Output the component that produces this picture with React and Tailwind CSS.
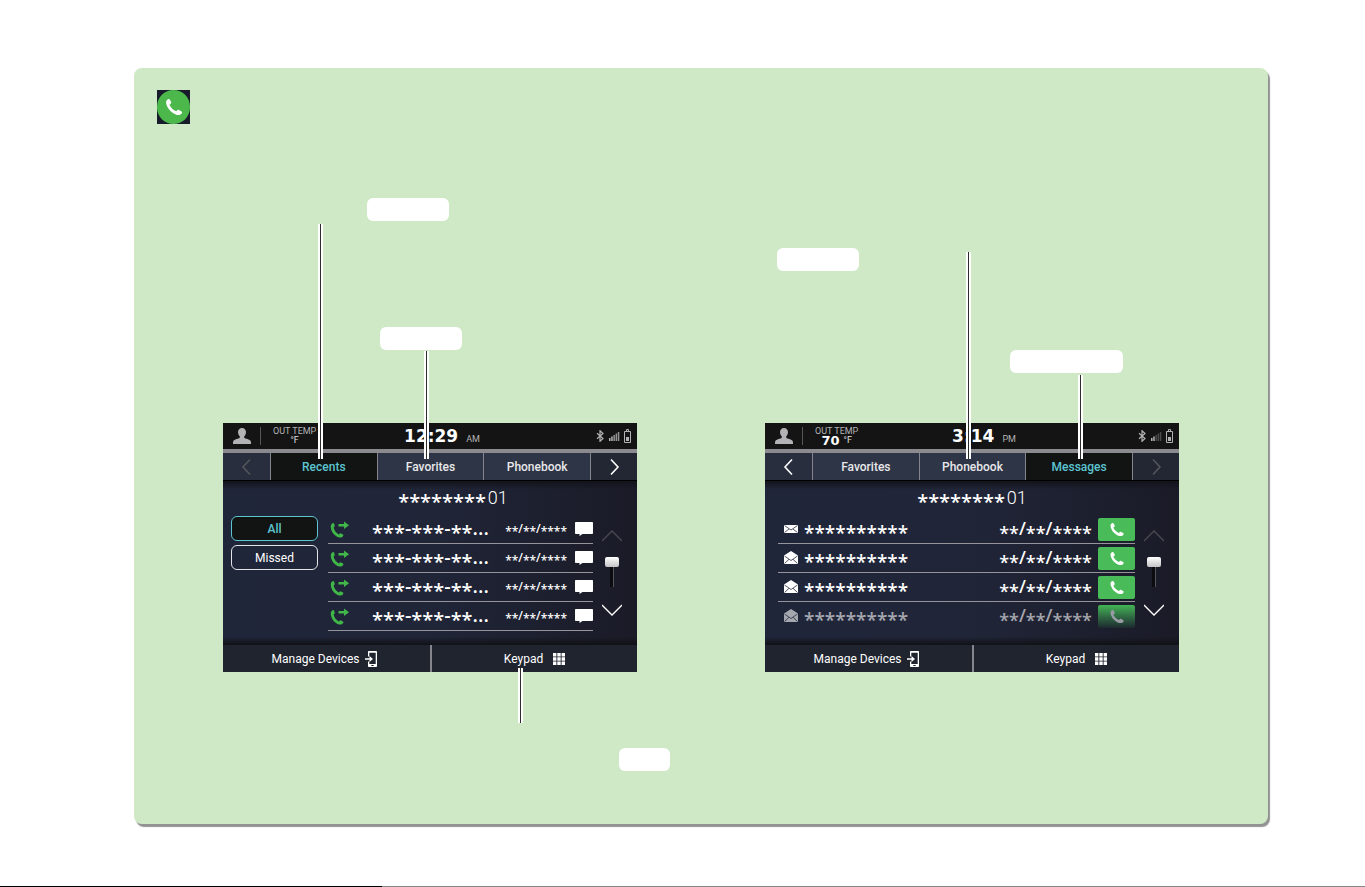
import React from 'react';

const PHONE = "M5.5 1.500c1-.7 2-.4 2.500.5l1.500 3c.4.8.1 1.600-.6 2.100l-1.400 1c1.500 3.600 4.500 6.700 8.300 8.200l1.300-1.300c.6-.6 1.400-.7 2.100-.3l3 1.700c.8.5 1 1.500.4 2.300-1.600 2.200-4.500 2.800-7.500 1.500C9 17.500 4.500 12.500 3.400 6.500 3 4.300 3.800 2.500 5.500 1.500z";

const PhoneIcon = ({ className }) => (
  <svg className={className} viewBox="1 0 24 22" fill="currentColor">
    <path d={PHONE} />
  </svg>
);

const OutgoingCall = () => (
  <svg className="w-5 h-[17px] text-[#41b649]" viewBox="0 0 20 17" fill="currentColor">
    <path d="M2.500 2.200c.7-.4 1.500-.1 1.700.5l.5 2c.1.600-.1 1-.6 1.300l-.5.400c.6 2.800 2.300 5.300 5.200 7l.9-.7c.4-.4.9-.4 1.300-.2l1.900 1c.6.4.7 1 .2 1.500-1.200 1.600-3 2-4.900 1.200C4.200 14.600 1 10.500.8 5.700.7 4.200 1.300 2.900 2.500 2.200z" />
    <path d="M8.500 3.100H14V.5l5 3.800-5 3.800V5.500H8.500z" />
  </svg>
);

const UserIcon = () => (
  <svg className="w-[18px] h-4 text-[#b3b3b5]" viewBox="0 0 18 16" fill="currentColor">
    <path d="M9 0c2.400 0 4 1.700 4 4 0 1.700-.7 3.400-1.800 4.400v1.400c.8.900 5.800 1.500 6.500 3.300.3.700.3 1.800.3 2.900H0c0-1.100 0-2.200.3-2.900.7-1.800 5.700-2.400 6.500-3.300V8.400C5.700 7.400 5 5.700 5 4c0-2.300 1.600-4 4-4z" />
  </svg>
);

const StatusIcons = ({ weak }) => (
  <div className="flex items-center gap-1 text-[#b3b3b5]">
    <svg className="w-2 h-3" viewBox="0 0 8 12" fill="none" stroke="currentColor" strokeWidth="1.200">
      <path d="M1 3.300l6 5.200L4 11.300V.7l3 2.800L1 8.700" />
    </svg>
    <svg className="w-3 h-3" viewBox="0 0 12 12" fill="currentColor">
      <path d="M1 8h1.500v3H1zM3.200 6.500h1.500V11H3.200z" />
      <path opacity={weak ? 0.35 : 0.8} d="M5.400 5h1.500v6H5.400zM7.600 3.500h1.500V11H7.600zM9.800 2h1.500v9H9.800z" />
    </svg>
    <svg className="w-[7px] h-[14px]" viewBox="0 0 7 14" fill="none" stroke="currentColor">
      <path d="M.5 2.500h6v11h-6zM2.500 2.500v-2h2v2" />
      <path d="M2 8h3v4H2z" fill="currentColor" stroke="none" />
    </svg>
  </div>
);

const Chevron = ({ d, className }) => (
  <svg className={className} viewBox="0 0 20 20" fill="none" stroke="currentColor" strokeWidth="1.600">
    <path d={d} />
  </svg>
);

const LEFT = "M13 2.500L6 10l7 7.500";
const RIGHT = "M7 2.500l7 7.500-7 7.500";

const MailIcon = () => (
  <svg className="w-[14px] h-[14px]" viewBox="0 0 14 14">
    <path d="M0 3h14v8H0z" fill="#fff" />
    <path d="M.5 3.500L7 8l6.500-4.500M.5 10.500L5 7M13.500 10.500L9 7" fill="none" stroke="#2a3040" strokeWidth=".8" />
  </svg>
);

const OpenMailIcon = () => (
  <svg className="w-[14px] h-[14px]" viewBox="0 0 14 14">
    <path d="M7 0l7 4.500V13H0V4.500z" fill="#fff" />
    <path d="M.5 5L7 9.500 13.500 5M.5 12.500L5 8.300M13.500 12.500L9 8.300" fill="none" stroke="#2a3040" strokeWidth=".8" />
  </svg>
);

const ChatIcon = () => (
  <svg className="w-[18px] h-[14px]" viewBox="0 0 18 14" fill="#fff">
    <path d="M1 0h16c.6 0 1 .4 1 1v10c0 .6-.4 1-1 1H7.500L4.500 14v-2H1c-.6 0-1-.4-1-1V1c0-.6.4-1 1-1z" />
  </svg>
);

const DeviceIcon = () => (
  <svg className="w-3 h-4" viewBox="0 0 12 16" fill="#fff">
    <path fillRule="evenodd" d="M3 1c0-.6.4-1 1-1h7c.6 0 1 .4 1 1v14c0 .6-.4 1-1 1H4c-.6 0-1-.4-1-1v-4.500h1.300V13h6.400V1.800H4.300v3.700H3zM6.300 14h2.400v1H6.300z" />
    <path d="M0 7.300h4.500V5L8 8l-3.500 3V8.700H0z" />
  </svg>
);

const KeypadIcon = () => (
  <svg className="w-3 h-3" viewBox="0 0 12 12" fill="#fff">
    <path d="M0 0h3.400v3.400H0zM4.300 0h3.400v3.400H4.300zM8.600 0H12v3.400H8.600zM0 4.300h3.400v3.400H0zM4.300 4.300h3.400v3.400H4.300zM8.600 4.300H12v3.400H8.600zM0 8.600h3.400V12H0zM4.300 8.600h3.400V12H4.300zM8.600 8.600H12V12H8.600z" />
  </svg>
);

// Stars sit high in the font, so they are dropped to the middle of the line
const Masked = ({ text, className }) => (
  <span className={`whitespace-nowrap font-['Noto_Sans'] font-medium leading-6 ${className}`}>
    {text.split(/(\*+)/).map((part, i) => (
      part[0] === '*' ? <span key={i} className="align-[-0.25em] leading-none">{part}</span> : part
    ))}
  </span>
);

const StatusBar = ({ temp, time, period, weak }) => (
  <div className="grid grid-cols-3 items-center h-[26px] bg-[#141414] text-[#b3b3b5]">
    <div className="flex items-center pl-[10px]">
      <UserIcon />
      <div className="h-[18px] ml-[9px] mr-3 border-l border-[#55555a]" />
      <div className="text-[9px] leading-[9px] whitespace-nowrap">
        <p>OUT TEMP</p>
        <p className="flex items-center justify-center gap-1 h-[10px]">
          {temp && <b className="font-['DejaVu_Sans'] text-[13px] text-white">{temp}</b>}
          <span className="text-[#e0e0e2]">°F</span>
        </p>
      </div>
    </div>
    <div className="flex items-baseline justify-center gap-2 pl-6">
      <b className="font-['DejaVu_Sans'] text-[17px] leading-6 text-white">{time}</b>
      <span className="text-[9px]">{period}</span>
    </div>
    <div className="flex justify-end pr-[6px]">
      <StatusIcons weak={weak} />
    </div>
  </div>
);

const Tabs = ({ tabs, active, atStart }) => (
  <div className="grid grid-cols-[47px_1fr_1fr_1fr_47px] h-7 border-b border-black bg-[#2e3546] text-xs font-medium text-[#e8e8ea]">
    <button aria-label="Previous" className="flex items-center justify-center bg-[#282e3d]">
      <Chevron d={LEFT} className={`w-5 h-5 ${atStart ? 'text-[#55565c]' : 'text-white'}`} />
    </button>
    {tabs.map(tab => (
      <button
        key={tab}
        className={`border-l border-[#85858d] ${tab === active ? 'bg-[#121313] text-[#5cc5d0]' : ''}`}
      >
        {tab}
      </button>
    ))}
    <button aria-label="Next" className="flex items-center justify-center border-l border-[#85858d] bg-[#222733]">
      <Chevron d={RIGHT} className={`w-5 h-5 ${atStart ? 'text-white' : 'text-[#55565c]'}`} />
    </button>
  </div>
);

const Scroller = () => (
  <div className="flex flex-col items-center w-5 ml-[9px] mr-[15px] pt-[15px]">
    <svg className="w-5 h-3 text-[#4a4a50]" viewBox="0 0 20 12" fill="none" stroke="currentColor" strokeWidth="1.300">
      <path d="M0 11L10 1l10 10" />
    </svg>
    <div className="w-[14px] h-[10px] mt-[15px] rounded-xs bg-linear-to-b from-white to-[#c4c4c6]" />
    <div className="w-1 h-5 border-r border-[#55555c] bg-[#0c0c10]" />
    <svg className="w-5 h-3 mt-[17px] text-white" viewBox="0 0 20 12" fill="none" stroke="currentColor" strokeWidth="1.300">
      <path d="M0 1l10 10L20 1" />
    </svg>
  </div>
);

const Screen = ({ status, tabs, active, atStart, children }) => (
  <div className="bg-linear-to-r from-[#20263a] via-[#202538] to-[#1a1b27] font-[Roboto,sans-serif] text-white">
    <StatusBar {...status} />
    <div className="h-1 bg-[#8a8a8f]" />
    <Tabs tabs={tabs} active={active} atStart={atStart} />
    <div className={`flex items-center justify-center h-[34px] bg-linear-to-b from-[#12131a] to-transparent to-25% ${atStart ? 'pl-[46px]' : ''}`}>
      <Masked text="********" className="text-xl" />
      <span className="pl-[2px] text-lg font-light">01</span>
    </div>
    <div className="flex">
      {children}
      <Scroller />
    </div>
    <div className="h-[14px] bg-linear-to-b from-transparent from-40% to-[#111216]" />
    <div className="grid grid-cols-2 h-[27px] text-xs bg-[#20242f]">
      <button className="flex items-center justify-center gap-[6px] pr-1">
        Manage Devices <DeviceIcon />
      </button>
      <button className="flex items-center justify-center gap-[10px] border-l-2 border-[#85858d]">
        Keypad <KeypadIcon />
      </button>
    </div>
  </div>
);

const RecentsScreen = () => (
  <Screen
    status={{ time: '12:29', period: 'AM' }}
    tabs={['Recents', 'Favorites', 'Phonebook']}
    active="Recents"
    atStart
  >
    <div className="flex flex-col gap-1 w-[87px] ml-2 mr-[10px] pt-px text-xs">
      <button className="h-[25px] border border-[#5cc5d0] rounded-md bg-[#121313] text-[#5cc5d0] font-medium">All</button>
      <button className="h-[25px] border border-[#e4e4e8] rounded-md">Missed</button>
    </div>
    <ul className="flex-1">
      {[1, 2, 3, 4].map(n => (
        <li key={n} className="flex items-center h-[29px] pl-[2px] border-b border-[#94949a]">
          <OutgoingCall />
          <Masked text="***-***-**..." className="pl-[22px] text-xl" />
          <Masked text="**/**/****" className="ml-auto pr-2 text-xs" />
          <ChatIcon />
        </li>
      ))}
    </ul>
  </Screen>
);

const MessagesScreen = () => (
  <Screen
    status={{ temp: '70', time: '3:14', period: 'PM', weak: true }}
    tabs={['Favorites', 'Phonebook', 'Messages']}
    active="Messages"
  >
    <ul className="flex-1 ml-[13px]">
      {[1, 2, 3, 4].map(n => {
        const faded = n === 4;
        return (
          <li key={n} className={`flex items-center h-[29px] pl-[6px] border-b ${faded ? 'border-transparent' : 'border-[#94949a]'}`}>
            <div className={`flex flex-1 items-center ${faded ? 'opacity-60' : ''}`}>
              {n === 1 ? <MailIcon /> : <OpenMailIcon />}
              <Masked text="**********" className="pl-[6px] text-[19px]" />
              <Masked text="**/**/****" className="ml-auto pr-[6px] text-lg" />
            </div>
            <button
              aria-label="Call"
              className={`flex items-center justify-center w-[37px] h-[23px] rounded-xs ${faded ? 'bg-linear-to-b from-[#42b553] to-[#1c2a2e] text-[#9a9aa5]' : 'bg-[#4abb59]'}`}
            >
              <PhoneIcon className="w-4 h-[15px]" />
            </button>
          </li>
        );
      })}
    </ul>
  </Screen>
);

const Pill = ({ className }) => <div className={`rounded-md bg-white ${className}`} />;

// Pointer from a note to a part of the screen
const Leader = ({ className }) => (
  <div className={`absolute w-[5px] border-x-2 border-white bg-[#2b2b2b] ${className}`} />
);

const App = () => (
  <div className="flex flex-col min-h-screen bg-white">
    <main className="ml-[134px] mr-[97px] mt-[68px] mb-[62px] pb-[53px] rounded-lg bg-[#cfe8c5] shadow-[2px_3px_1px_#929292]">
      <header className="pl-[23px] pt-[22px]">
        <div className="w-[33px] h-[34px] bg-[#181c2a]">
          <div className="flex items-center justify-center h-full rounded-full bg-[#4cb84c] text-white">
            <PhoneIcon className="w-5 h-[18px]" />
          </div>
        </div>
      </header>
      <div className="grid grid-cols-2 gap-32 px-[89px]">
        <section className="relative">
          <div className="h-[299px] pt-[74px]">
            <Pill className="w-[82px] h-[23px] ml-36" />
            <Pill className="w-[82px] h-[23px] ml-[157px] mt-[106px]" />
          </div>
          <RecentsScreen />
          <Pill className="w-[51px] h-[23px] ml-[396px] mt-[76px]" />
          <Leader className="left-[95px] top-[100px] h-[235px]" />
          <Leader className="left-[201px] top-[227px] h-[108px]" />
          <Leader className="left-[295px] top-[544px] h-[55px]" />
        </section>
        <section className="relative">
          <div className="h-[299px] pt-[124px]">
            <Pill className="w-[82px] h-[23px] ml-3" />
            <Pill className="w-[113px] h-[23px] ml-[245px] mt-[79px]" />
          </div>
          <MessagesScreen />
          <Leader className="left-[201px] top-32 h-[207px]" />
          <Leader className="left-[313px] top-[251px] h-[84px]" />
        </section>
      </div>
    </main>
    <footer className="flex h-px mt-auto bg-[#868686]">
      <div className="w-[28%] bg-black" />
    </footer>
  </div>
);

export default App;
